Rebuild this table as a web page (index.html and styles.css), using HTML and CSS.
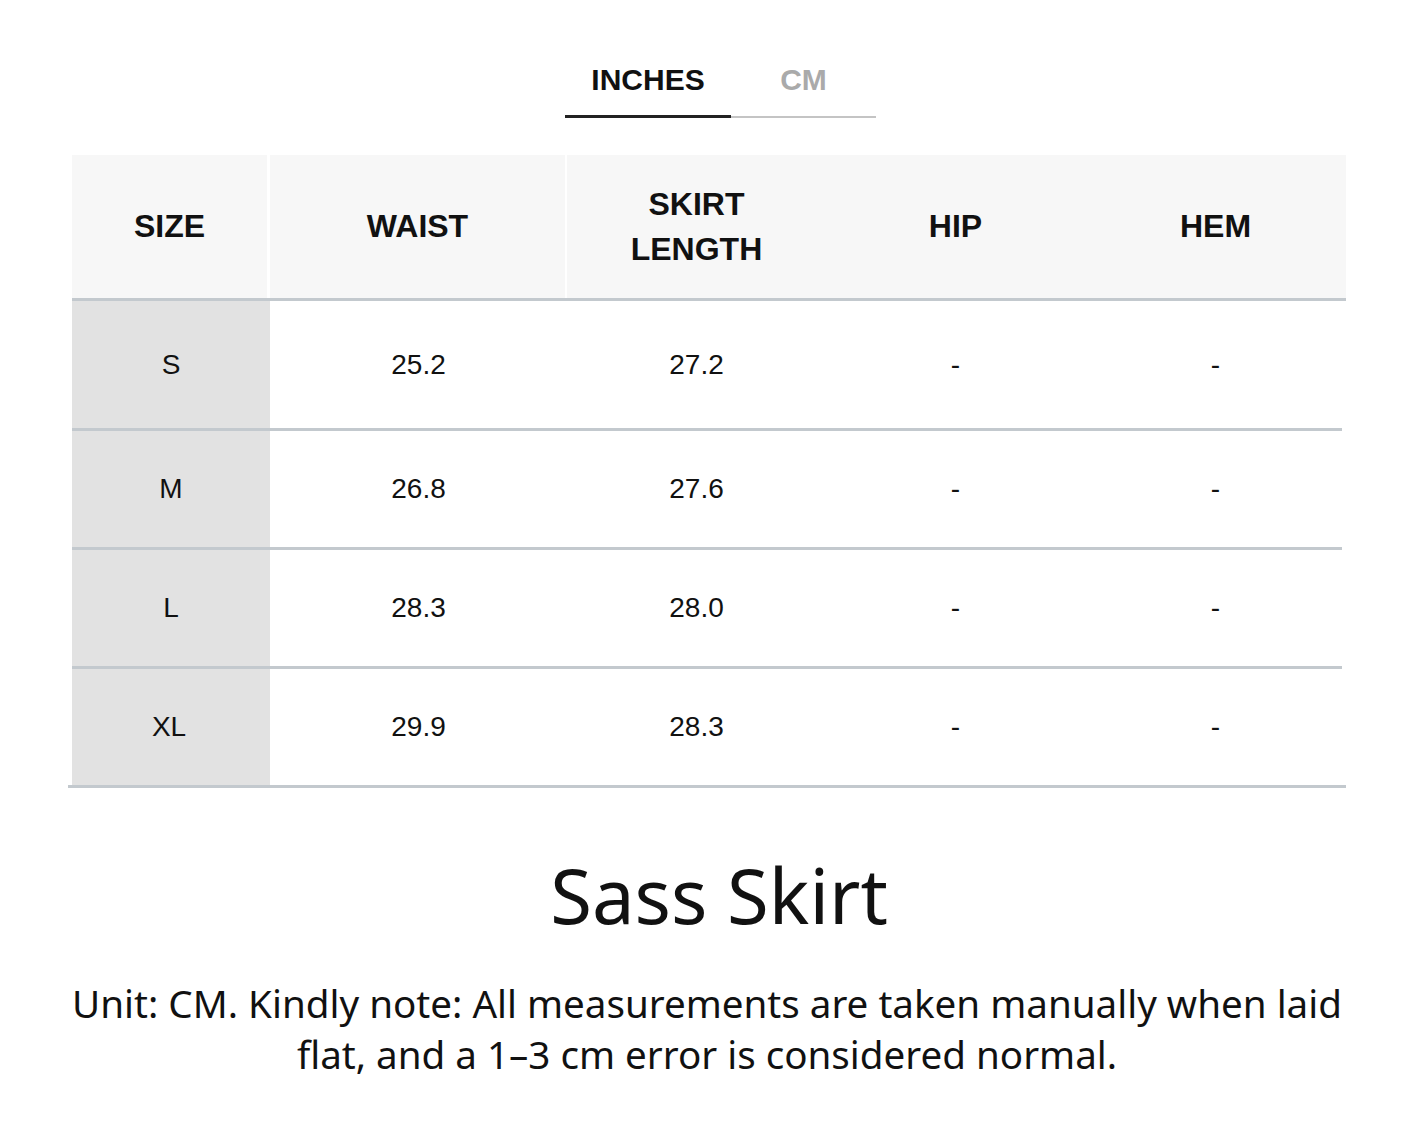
FILE: index.html
```html
<!DOCTYPE html>
<html>
<head>
<meta charset="utf-8">
<link rel="stylesheet" href="styles.css">
</head>
<body>
<div class="page">
  <div class="tabs">
    <div class="tab active">INCHES</div>
    <div class="tab">CM</div>
  </div>
  <div class="chart">
    <div class="row head">
      <div class="cell size sep">SIZE</div>
      <div class="cell sep2">WAIST</div>
      <div class="cell">SKIRT<br>LENGTH</div>
      <div class="cell">HIP</div>
      <div class="cell">HEM</div>
    </div>
    <div class="row body first">
      <div class="cell size">S</div>
      <div class="cell">25.2</div>
      <div class="cell">27.2</div>
      <div class="cell">-</div>
      <div class="cell">-</div>
    </div>
    <div class="row body">
      <div class="cell size">M</div>
      <div class="cell">26.8</div>
      <div class="cell">27.6</div>
      <div class="cell">-</div>
      <div class="cell">-</div>
    </div>
    <div class="row body">
      <div class="cell size">L</div>
      <div class="cell">28.3</div>
      <div class="cell">28.0</div>
      <div class="cell">-</div>
      <div class="cell">-</div>
    </div>
    <div class="row body last">
      <div class="cell size">XL</div>
      <div class="cell">29.9</div>
      <div class="cell">28.3</div>
      <div class="cell">-</div>
      <div class="cell">-</div>
    </div>
  </div>
  <h1 class="title">Sass Skirt</h1>
  <p class="note">Unit: CM. Kindly note: All measurements are taken manually when laid flat, and a 1–3 cm error is considered normal.</p>
</div>
</body>
</html>
```

FILE: styles.css
```css
html, body {
  margin: 0;
  padding: 0;
  background: #ffffff;
}
.page {
  width: 1414px;
  padding-top: 58px;
  font-family: "Liberation Sans", Arial, sans-serif;
  color: #111;
}
.tabs {
  display: flex;
  justify-content: flex-start;
  margin-left: 565px;
  width: 311px;
  border-bottom: 2px solid #c4c4c4;
}
.tab {
  font-weight: bold;
  font-size: 30px;
  line-height: 44px;
  padding-bottom: 14px;
  color: #aaaaaa;
  text-align: center;
}
.tab.active {
  width: 166px;
  color: #111;
  box-shadow: inset 0 -3px 0 #222;
  margin-bottom: -2px;
  padding-bottom: 16px;
}
.tab:not(.active) {
  flex: 1;
  text-align: center;
}
.chart {
  margin-top: 37px;
  margin-left: 72px;
  width: 1274px;
}
.row {
  display: grid;
  grid-template-columns: 198px 297px 259px 259px 261px;
}
.cell {
  display: flex;
  align-items: center;
  justify-content: center;
  text-align: center;
}
.row.head {
  height: 143px;
  background: #f7f7f7;
  border-bottom: 3px solid #c3c9ce;
  font-weight: bold;
  font-size: 32px;
  line-height: 45px;
}
.row.head .sep {
  border-right: 3px solid #ffffff;
}
.row.head .sep2 {
  border-right: 2px solid #ffffff;
}
.row.body {
  height: 116px;
  font-size: 28px;
  border-bottom: 3px solid #c3c9ce;
  width: 1270px;
}
.row.body.first {
  height: 127px;
}
.row.body.last {
  width: 1278px;
  margin-left: -4px;
  grid-template-columns: 202px 297px 259px 259px 261px;
}
.row.body .size {
  background: #e2e2e2;
}
.row.body.last .size {
  background: linear-gradient(to right, #ffffff 4px, #e2e2e2 4px);
}
.title {
  margin: 62px 0 0 0;
  padding-left: 24px;
  text-align: center;
  font-family: "Noto Sans", "Open Sans", sans-serif;
  font-weight: normal;
  font-size: 76px;
  line-height: 90px;
  color: #111;
}
.note {
  margin: 38px auto 0 auto;
  width: 1290px;
  text-align: center;
  font-family: "Noto Sans", "Open Sans", sans-serif;
  font-size: 38.6px;
  line-height: 51px;
  color: #111;
}
```
